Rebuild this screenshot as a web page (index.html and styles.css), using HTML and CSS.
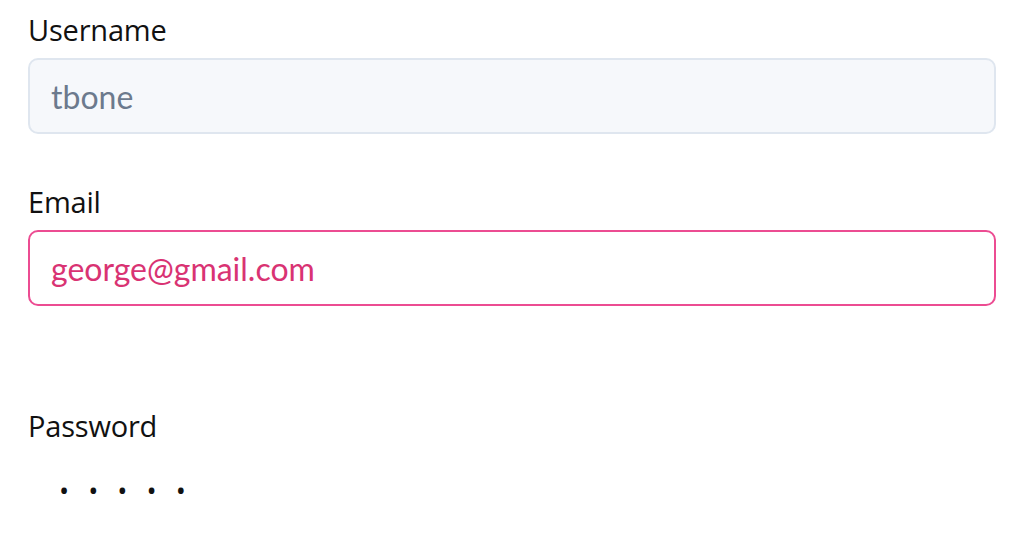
FILE: index.html
```html
<!DOCTYPE html>
<html lang="en">
<head>
    <meta charset="UTF-8">
    <meta name="viewport" content="width=device-width, initial-scale=1.0">
    <title>Sign up</title>
    <link rel="stylesheet" href="styles.css">
</head>
<body>
    <form class="form">
        <div class="field">
            <label class="label" for="username">Username</label>
            <input class="input input-disabled" id="username" type="text" value="tbone" readonly>
        </div>
        <div class="field">
            <label class="label" for="email">Email</label>
            <input class="input input-focus" id="email" type="email" value="george@gmail.com">
        </div>
        <div class="field field-password">
            <label class="label" for="password">Password</label>
            <div class="dots">• • • • •</div>
        </div>
    </form>
</body>
</html>
```

FILE: styles.css
```css
body { margin: 0; background: #fff; font-family: "Open Sans", "Noto Sans", sans-serif; color: #111; }
.form { padding: 12px 28px 0 28px; }
.field { display: flex; flex-direction: column; margin-bottom: 50px; }
.field-password { margin-top: 102px; }
.label { font-size: 29px; line-height: 36px; margin-bottom: 10px; letter-spacing: -0.2px; }
.input { box-sizing: border-box; width: 100%; height: 76px; padding: 0 21px; border-radius: 10px; font-family: "Lato", "Open Sans", sans-serif; font-size: 32px; outline: none; }
.input-disabled { background: #f6f8fb; border: 2px solid #dfe6ef; color: #6c7a8d; }
.input-focus { background: #fff; border: 2px solid #ec4c92; color: #d93373; }
.dots { margin-top: 17px; padding-left: 31px; font-size: 27px; letter-spacing: 6px; line-height: 40px; color: #111; }
```
